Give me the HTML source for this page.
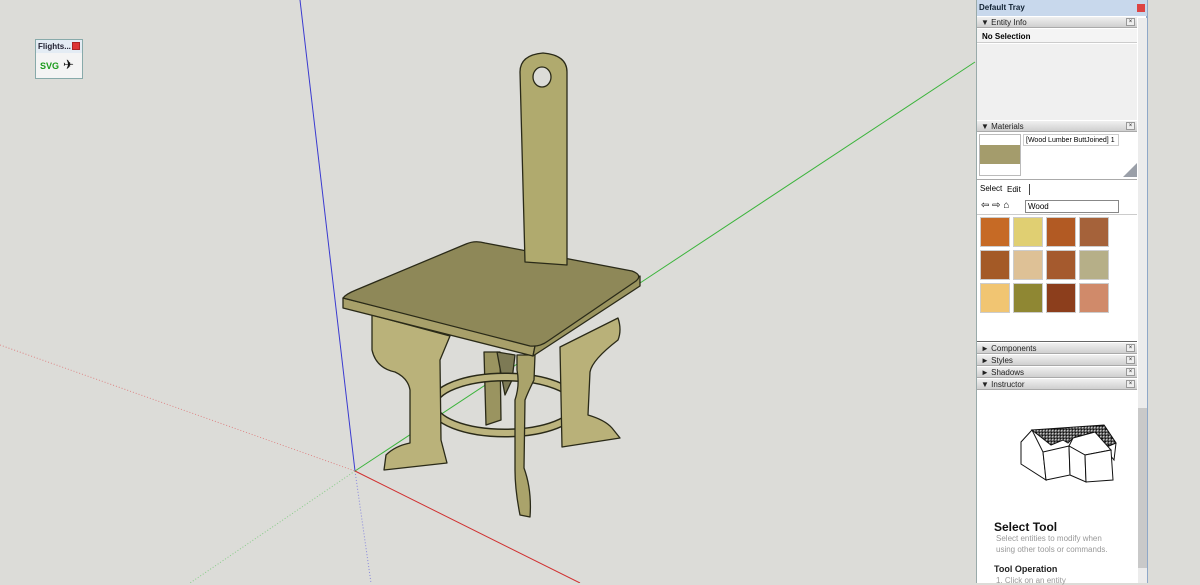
<!DOCTYPE html>
<html><head><meta charset="utf-8"><style>
*{margin:0;padding:0;box-sizing:border-box}
body{width:1200px;height:583px;overflow:hidden;background:#dcdcd8;font-family:"Liberation Sans",Arial,sans-serif;position:relative}
.abs{position:absolute}
.tray{left:976px;top:0;width:172px;height:583px;background:#fff;border-left:1px solid #9aa;border-right:2px solid #8fa8c8}
.hdr{position:absolute;left:0;width:160px;height:11px;background:linear-gradient(#f0f0f0,#cfcfcf);border-bottom:1px solid #aaa;font-size:8px;line-height:11px;color:#222;padding-left:4px}
.hdr .x{position:absolute;right:2px;top:1px;width:9px;height:8px;border:1px solid #999;background:#eee;font-size:6px;line-height:6px;text-align:center}
.sw{position:absolute;width:30px;height:30px;border:1px solid #ccc}
</style></head><body>
<svg class="abs" style="left:0;top:0" width="976" height="583">
<line x1="300" y1="0" x2="355" y2="471" stroke="#3a3ad0" stroke-width="1"/>
<line x1="355" y1="471" x2="371" y2="583" stroke="#8888dd" stroke-width="1" stroke-dasharray="1,2"/>
<line x1="355" y1="471" x2="975" y2="62" stroke="#3cb43c" stroke-width="1"/>
<line x1="355" y1="471" x2="190" y2="583" stroke="#8c8" stroke-width="1" stroke-dasharray="1,2"/>
<line x1="355" y1="471" x2="580" y2="583" stroke="#d03030" stroke-width="1"/>
<line x1="0" y1="345" x2="355" y2="471" stroke="#d88" stroke-width="1" stroke-dasharray="1,2"/>
<g stroke="#2a2a18" stroke-width="1.3" stroke-linejoin="round">
<path d="M484 352 L500 352 L501 420 L486 425 Z" fill="#9a9460"/>
<path d="M497 352 L515 355 L512 380 L505 395 Z" fill="#7d7a55"/>
<ellipse cx="505" cy="405" rx="72" ry="28" fill="none" stroke="#2a2a18" stroke-width="9"/>
<ellipse cx="505" cy="405" rx="72" ry="28" fill="none" stroke="#bcb47e" stroke-width="6"/>
<path d="M372 315 L372 350 Q376 368 395 372 Q408 378 410 390 L410 443 Q395 446 386 455 L384 470 L447 463 L441 440 L440 360 L450 336 Z" fill="#bab27a"/>
<path d="M560 347 L618 318 Q622 330 618 340 Q592 360 590 372 L588 415 Q605 420 612 428 L620 438 L562 447 Z" fill="#b9b179"/>
<path d="M517 355 L535 355 L534 380 Q528 392 525 400 L524 468 Q532 490 530 517 L520 515 Q515 490 515 470 L515 400 Q520 385 517 370 Z" fill="#aaa36b"/>
<path d="M343 298 L343 308 L533 356 L535 346 Z" fill="#a8a06a"/>
<path d="M535 346 L533 356 L640 286 L640 276 Z" fill="#9a945f"/>
<path d="M343 298 Q346 294 356 290 L466 244 Q475 240 485 243 L632 271 Q643 275 636 281 L548 341 Q540 347 530 346 Z" fill="#8e8858"/>
<path d="M520 72 Q520 55 543 53 Q567 55 567 72 L567 265 L525 262 Z" fill="#b0aa6e"/>
<ellipse cx="542" cy="77" rx="9" ry="10" fill="#dcdcd8"/>
</g>
</svg>
<div class="abs" style="left:35px;top:39px;width:48px;height:40px;background:#e4ecf4;border:1px solid #8aa"></div>
<div class="abs" style="left:38px;top:42px;font-size:8px;font-weight:bold;color:#223">Flights...</div>
<div class="abs" style="left:72px;top:42px;width:8px;height:8px;background:#d33;border:1px solid #a22"></div>
<div class="abs" style="left:36px;top:53px;width:46px;height:25px;background:#f4f4f4"></div>
<div class="abs" style="left:40px;top:61px;font-size:9px;font-weight:bold;color:#1a9a1a">SVG</div>
<div class="abs" style="left:63px;top:57px;font-size:13px;color:#111">✈</div>
<div class="abs" style="left:1148px;top:0;width:52px;height:583px;background:#dcdcd8"></div>
<div class="tray abs">
<div class="abs" style="left:0;top:0;width:170px;height:16px;background:#c8d8ec;font-size:8px;font-weight:bold;line-height:16px;padding-left:2px;color:#123">Default Tray</div>
<div class="abs" style="left:160px;top:4px;width:8px;height:8px;background:#d44"></div>
<div class="abs" style="left:161px;top:18px;width:9px;height:565px;background:#ececec"></div>
<div class="abs" style="left:161px;top:408px;width:9px;height:160px;background:#c9c9c9"></div>
<div class="hdr" style="top:17px">▼ Entity Info<span class="x">×</span></div>
<div class="abs" style="left:0;top:29px;width:160px;height:14px;background:#f4f4f4;border-bottom:1px solid #ccc;font-size:8px;font-weight:bold;padding:3px 5px">No Selection</div>
<div class="abs" style="left:0;top:44px;width:160px;height:76px;background:#f0f0f0"></div>
<div class="hdr" style="top:121px">▼ Materials<span class="x">×</span></div>
<div class="abs" style="left:2px;top:134px;width:42px;height:42px;border:1px solid #bbb;background:#fff"></div>
<div class="abs" style="left:3px;top:145px;width:40px;height:19px;background:#a49c6c"></div>
<div class="abs" style="left:46px;top:134px;width:96px;height:12px;border:1px solid #ccc;font-size:7px;line-height:11px;padding-left:2px;white-space:nowrap;overflow:hidden">[Wood Lumber ButtJoined] 1</div>
<div class="abs" style="left:146px;top:163px;width:0;height:0;border-left:14px solid transparent;border-bottom:14px solid #9a9fa8"></div>
<div class="abs" style="left:0;top:179px;width:160px;height:1px;background:#aaa"></div>
<div class="abs" style="left:3px;top:184px;font-size:8px">Select</div>
<div class="abs" style="left:30px;top:185px;font-size:8px">Edit</div>
<div class="abs" style="left:52px;top:184px;width:1px;height:11px;background:#444"></div>
<div class="abs" style="left:4px;top:200px;font-size:10px">⇦ ⇨ ⌂</div>
<div class="abs" style="left:48px;top:200px;width:94px;height:13px;border:1px solid #888;font-size:8px;line-height:11px;padding-left:2px;background:#fff">Wood</div>
<div class="abs" style="left:0;top:214px;width:160px;height:1px;background:#ccc"></div>
<div class="sw" style="left:3px;top:217px;background:#c66a25"></div>
<div class="sw" style="left:36px;top:217px;background:#e0cf72"></div>
<div class="sw" style="left:69px;top:217px;background:#b25a23"></div>
<div class="sw" style="left:102px;top:217px;background:#a5623a"></div>
<div class="sw" style="left:3px;top:250px;background:#a45a26"></div>
<div class="sw" style="left:36px;top:250px;background:#dec196"></div>
<div class="sw" style="left:69px;top:250px;background:#a55a2e"></div>
<div class="sw" style="left:102px;top:250px;background:#b6af88"></div>
<div class="sw" style="left:3px;top:283px;background:#f1c572"></div>
<div class="sw" style="left:36px;top:283px;background:#8f8733"></div>
<div class="sw" style="left:69px;top:283px;background:#8c3e1c"></div>
<div class="sw" style="left:102px;top:283px;background:#d08a6a"></div>
<div class="abs" style="left:0;top:341px;width:160px;height:1px;background:#666"></div>
<div class="hdr" style="top:343px">► Components<span class="x">×</span></div>
<div class="hdr" style="top:355px">► Styles<span class="x">×</span></div>
<div class="hdr" style="top:367px">► Shadows<span class="x">×</span></div>
<div class="hdr" style="top:379px">▼ Instructor<span class="x">×</span></div>
<svg class="abs" style="left:30px;top:415px" width="130" height="80" viewBox="1006 415 130 80" fill="none" stroke="#111" stroke-width="1">
<defs><pattern id="d" width="3" height="3" patternUnits="userSpaceOnUse"><rect width="3" height="3" fill="#fff"/><rect width="1" height="1" fill="#999"/></pattern></defs>
<path d="M1103 425 L1115 443 L1113 460 L1109 455" fill="#fff"/>
<path d="M1031 430 L1103 425 L1115 443 L1108 446 L1098 446 L1094 432 L1072 438 L1067 443 L1062 440 L1050 445 Z" fill="url(#d)"/>
<path d="M1020 442 L1031 430 L1042 452 L1045 480 L1020 464 Z" fill="#fff"/>
<path d="M1042 452 L1068 446 L1069 475 L1045 480 Z" fill="#fff"/>
<path d="M1068 446 L1072 438 L1094 432 L1110 450 L1084 455 Z" fill="#fff"/>
<path d="M1068 446 L1084 455 L1085 482 L1069 475 Z" fill="#fff"/>
<path d="M1084 455 L1110 450 L1112 480 L1085 482 Z" fill="#fff"/>
</svg>
<div class="abs" style="left:17px;top:520px;font-size:12px;font-weight:bold;color:#111">Select Tool</div>
<div class="abs" style="left:19px;top:533px;font-size:8px;line-height:11px;color:#999">Select entities to modify when<br>using other tools or commands.</div>
<div class="abs" style="left:17px;top:564px;font-size:9px;font-weight:bold;color:#222">Tool Operation</div>
<div class="abs" style="left:19px;top:576px;font-size:8px;color:#999">1. Click on an entity</div>
</div>
</body></html>
